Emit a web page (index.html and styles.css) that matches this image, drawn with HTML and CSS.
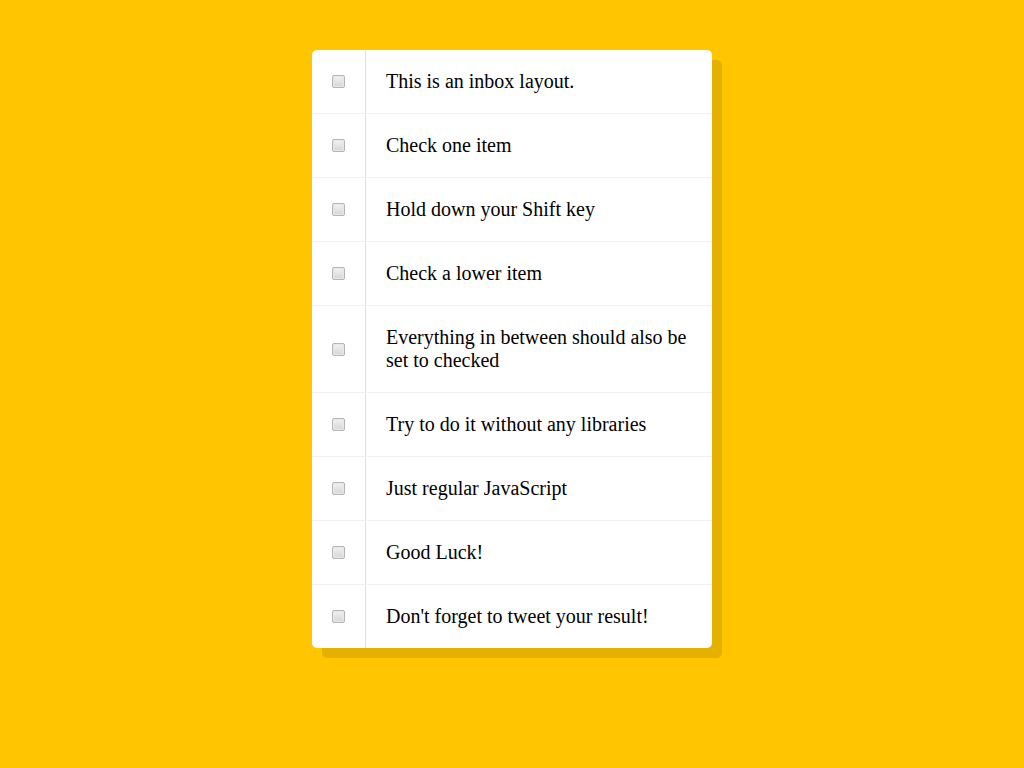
FILE: index.html
```html
<!DOCTYPE html>
<html lang="en">
<head>
<meta charset="UTF-8">
<title>Hold Shift to Check Multiple Checkboxes</title>
<link rel="stylesheet" href="styles.css">
</head>
<body>
<div class="inbox">
  <div class="item"><input type="checkbox"><p>This is an inbox layout.</p></div>
  <div class="item"><input type="checkbox"><p>Check one item</p></div>
  <div class="item"><input type="checkbox"><p>Hold down your Shift key</p></div>
  <div class="item"><input type="checkbox"><p>Check a lower item</p></div>
  <div class="item"><input type="checkbox"><p>Everything in between should also be set to checked</p></div>
  <div class="item"><input type="checkbox"><p>Try to do it without any libraries</p></div>
  <div class="item"><input type="checkbox"><p>Just regular JavaScript</p></div>
  <div class="item"><input type="checkbox"><p>Good Luck!</p></div>
  <div class="item"><input type="checkbox"><p>Don't forget to tweet your result!</p></div>
</div>
</body>
</html>
```
FILE: styles.css
```css
html {
  font-family: "Liberation Sans", sans-serif;
  background: #ffc600;
}
body {
  margin: 8px;
}
.inbox {
  max-width: 400px;
  margin: 42px auto 50px;
  background: white;
  border-radius: 5px;
  box-shadow: 10px 10px 0 rgba(0,0,0,0.1);
}
.item {
  display: flex;
  align-items: center;
  border-bottom: 1px solid #F1F1F1;
}
.item:last-child {
  border-bottom: 0;
}
input[type="checkbox"] {
  -webkit-appearance: none;
  appearance: none;
  box-sizing: border-box;
  width: 13px;
  height: 13px;
  margin: 20px;
  border: 1px solid #b4b4b4;
  border-radius: 2px;
  background: linear-gradient(#f2f2f2, #d6d6d6);
  box-shadow: inset 0 0 0 1px #e8e8e8;
}
.item p {
  margin: 0;
  padding: 20px;
  flex: 1;
  font-family: "Liberation Serif", serif;
  font-size: 20px;
  line-height: 23px;
  font-weight: 200;
  border-left: 1px solid #D1E2FF;
}
```
